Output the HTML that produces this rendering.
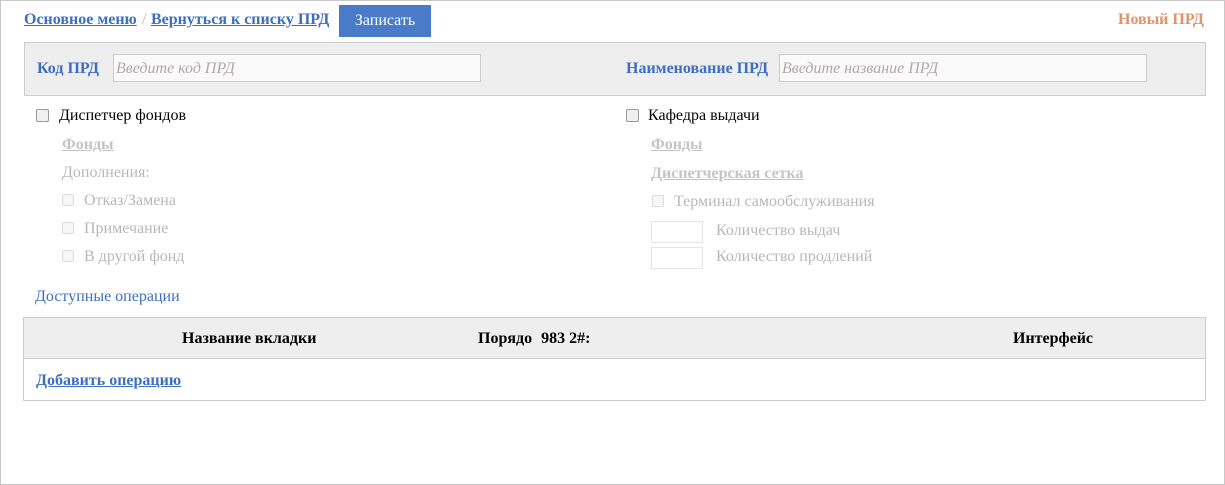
<!DOCTYPE html><html><head><meta charset="utf-8"><style>
body{margin:0;width:1225px;height:485px;position:relative;font-family:"Liberation Serif",serif;font-size:16px;background:#fff;overflow:hidden}
.a{position:absolute;white-space:nowrap}
.frame{position:absolute;left:0;top:0;width:1223px;height:483px;border:1px solid #c8c8c8}
.lnk{color:#3d6fc0;font-weight:bold;text-decoration:underline}
.g{color:#b8b8b8}
.gl{color:#c4c4c4;font-weight:bold;text-decoration:underline}
.cb{position:absolute;width:11px;height:11px;border:1px solid #999;border-radius:2px;background:#f0f0f0}
.cbd{position:absolute;width:10px;height:10px;border:1px solid #ddd;border-radius:2px;background:#f6f6f6}
.inp{position:absolute;height:28px;border:1px solid #ccc;background:#fafafa;box-sizing:border-box;color:#b0a8a8;font-style:italic;padding:5px 0 0 2px;font-size:16px}
.sm{position:absolute;width:50px;height:20px;border:1px solid #e4e4e4}
</style></head><body>
<div class="frame"></div>
<div class="a lnk" style="left:24px;top:11px">Основное меню</div>
<div class="a" style="left:142px;top:11px;color:#bbb">/</div>
<div class="a lnk" style="left:151px;top:11px">Вернуться к списку ПРД</div>
<div class="a" style="left:339px;top:5px;width:92px;height:32px;background:#4a7bc8;color:#fff;text-align:center;line-height:32px">Записать</div>
<div class="a" style="left:1118px;top:11px;color:#e0946a;font-weight:bold">Новый ПРД</div>
<div class="a" style="left:24px;top:42px;width:1180px;height:52px;background:#eee;border:1px solid #ccc"></div>
<div class="a" style="left:37px;top:60px;color:#3d6fc0;font-weight:bold">Код ПРД</div>
<div class="inp" style="left:113px;top:54px;width:368px">Введите код ПРД</div>
<div class="a" style="left:626px;top:60px;color:#3d6fc0;font-weight:bold">Наименование ПРД</div>
<div class="inp" style="left:779px;top:54px;width:368px">Введите название ПРД</div>
<div class="cb" style="left:36px;top:109px"></div>
<div class="a" style="left:59px;top:107px">Диспетчер фондов</div>
<div class="a gl" style="left:62px;top:136px">Фонды</div>
<div class="a g" style="left:62px;top:164px">Дополнения:</div>
<div class="cbd" style="left:62px;top:194px"></div><div class="a g" style="left:84px;top:192px">Отказ/Замена</div>
<div class="cbd" style="left:62px;top:222px"></div><div class="a g" style="left:84px;top:220px">Примечание</div>
<div class="cbd" style="left:62px;top:250px"></div><div class="a g" style="left:84px;top:248px">В другой фонд</div>
<div class="cb" style="left:626px;top:109px"></div>
<div class="a" style="left:648px;top:107px">Кафедра выдачи</div>
<div class="a gl" style="left:651px;top:136px">Фонды</div>
<div class="a gl" style="left:651px;top:165px">Диспетчерская сетка</div>
<div class="cbd" style="left:652px;top:195px"></div><div class="a g" style="left:674px;top:193px">Терминал самообслуживания</div>
<div class="sm" style="left:651px;top:221px"></div><div class="a g" style="left:716px;top:222px">Количество выдач</div>
<div class="sm" style="left:651px;top:247px"></div><div class="a g" style="left:716px;top:248px">Количество продлений</div>
<div class="a" style="left:35px;top:288px;color:#3d6fc0">Доступные операции</div>
<div class="a" style="left:23px;top:317px;width:1181px;height:82px;border:1px solid #ccc"></div>
<div class="a" style="left:24px;top:318px;width:1181px;height:40px;background:#eee;border-bottom:1px solid #ccc"></div>
<div class="a" style="left:182px;top:330px;font-weight:bold">Название вкладки</div>
<div class="a" style="left:478px;top:330px;font-weight:bold">Порядо<span style="margin-left:9px">983 2#:</span></div>
<div class="a" style="left:1013px;top:330px;font-weight:bold">Интерфейс</div>
<div class="a lnk" style="left:36px;top:372px">Добавить операцию</div>
</body></html>
